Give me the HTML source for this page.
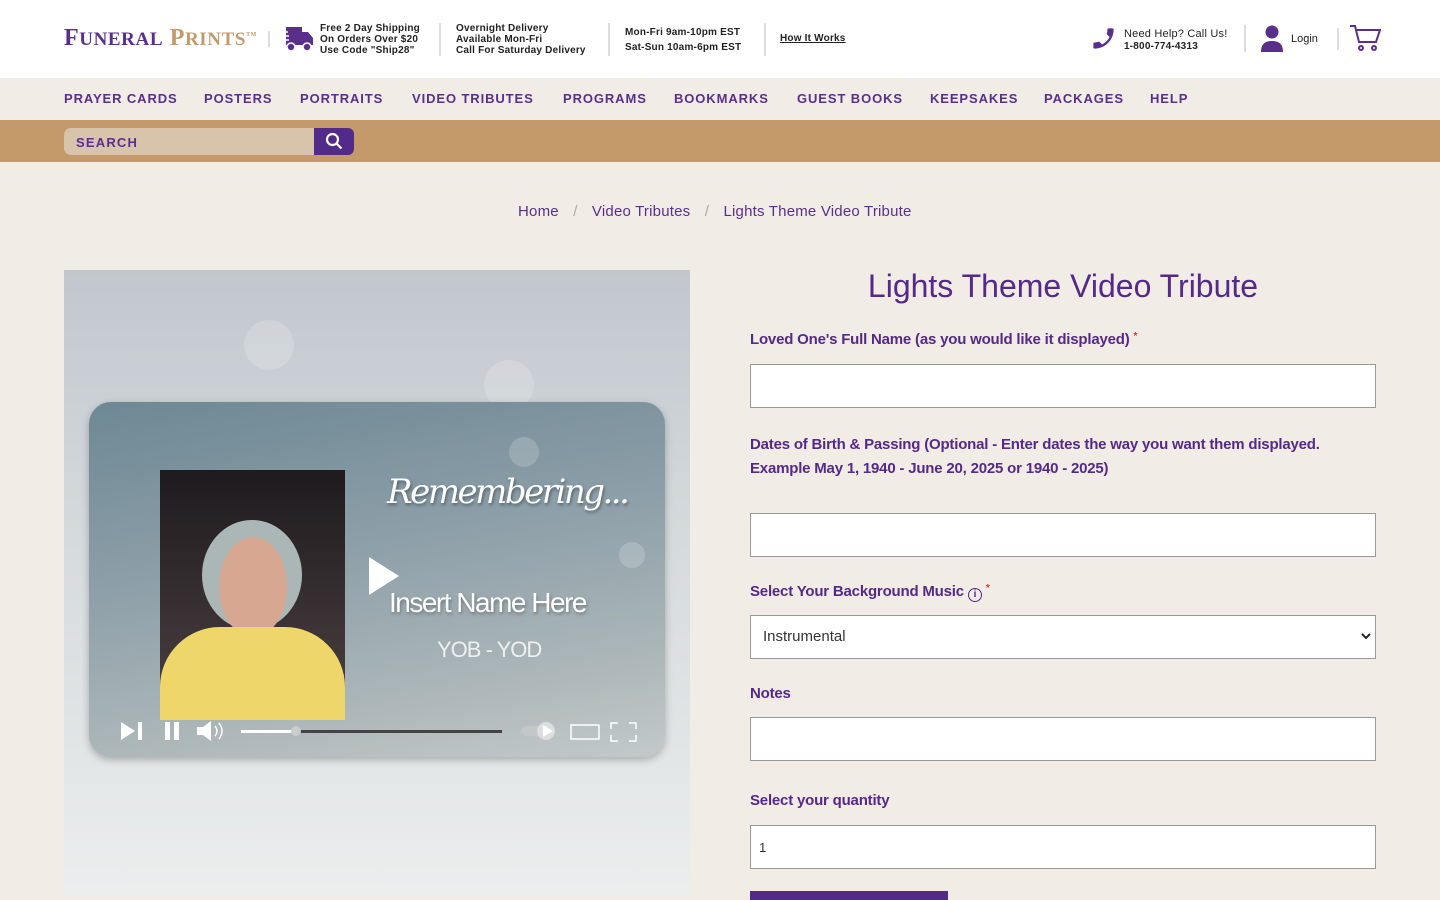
<!DOCTYPE html>
<html><head><meta charset="utf-8"><style>
*{box-sizing:border-box;margin:0;padding:0}
body{width:1440px;height:900px;overflow:hidden;background:#f1ece5;font-family:"Liberation Sans",sans-serif;position:relative}
.a{position:absolute}
.hdr{left:0;top:0;width:1440px;height:78px;background:#fff}
.sm{font-size:10px;line-height:11px;color:#222;font-weight:bold;letter-spacing:.2px}
.sep{width:2px;background:#ddd}
.nav{top:78px;left:0;width:1440px;height:42px;background:#f1ece5}
.nav span{position:absolute;top:91px;font-size:13px;font-weight:bold;color:#5a2f8c;letter-spacing:.9px}
.tan{top:120px;left:0;width:1440px;height:42px;background:#c49a6b}
.lab{font-size:15px;color:#55298a;font-weight:bold;letter-spacing:-.2px}
.inp{left:750px;width:626px;height:44px;background:#fff;border:1px solid #999}
.bk{border-radius:50%;background:rgba(255,255,255,.18)}
</style></head><body>
<div class="a hdr"></div>
<div class="a" style="left:64px;top:25px;font-family:'Liberation Serif',serif;font-weight:bold;font-size:24px;color:#5a2f8c;letter-spacing:.6px">F<span style="font-size:19px">UNERAL</span> <span style="color:#c49a6b">P<span style="font-size:19px">RINTS</span></span><sup style="font-size:6px;color:#c49a6b">TM</sup></div>
<div class="a sep" style="left:268px;top:31px;height:16px"></div>
<svg class="a" style="left:280px;top:25px" width="34" height="27" viewBox="0 0 34 27"><path d="M6 2h16v18H6z M22 7h6l5 6v7H22z" fill="#5a2f8c"/><circle cx="11" cy="22" r="4" fill="#5a2f8c" stroke="#fff" stroke-width="1.5"/><circle cx="27" cy="22" r="4" fill="#5a2f8c" stroke="#fff" stroke-width="1.5"/><path d="M0 7h8M1 11h8M2 15h7" stroke="#fff" stroke-width="1.5"/></svg>
<div class="a sm" style="left:320px;top:23px">Free 2 Day Shipping<br>On Orders Over $20<br>Use Code "Ship28"</div>
<div class="a sep" style="left:439px;top:23px;height:33px"></div>
<div class="a sm" style="left:456px;top:23px">Overnight Delivery<br>Available Mon-Fri<br>Call For Saturday Delivery</div>
<div class="a sep" style="left:608px;top:23px;height:33px"></div>
<div class="a sm" style="left:625px;top:25px;line-height:15px">Mon-Fri 9am-10pm EST<br>Sat-Sun 10am-6pm EST</div>
<div class="a sep" style="left:764px;top:23px;height:33px"></div>
<div class="a sm" style="left:780px;top:33px;text-decoration:underline">How It Works</div>
<svg class="a" style="left:1090px;top:25px" width="27" height="27" viewBox="0 0 24 24"><path d="M20 15.5c-1.2 0-2.4-.2-3.6-.6-.3-.1-.7 0-1 .2l-2.2 2.2c-2.8-1.4-5.1-3.8-6.6-6.6l2.2-2.2c.3-.3.4-.7.2-1-.3-1.100-.5-2.3-.5-3.5 0-.6-.4-1-1-1H4c-.6 0-1 .4-1 1 0 9.4 7.6 17 17 17 .6 0 1-.4 1-1v-3.5c0-.6-.4-1-1-1z" fill="#5a2f8c" transform="scale(-1,1) translate(-24,0)"/></svg>
<div class="a sm" style="left:1124px;top:28px;font-size:11px;line-height:12px;font-weight:normal">Need Help? Call Us!<br><b style="font-size:10px">1-800-774-4313</b></div>
<div class="a sep" style="left:1244px;top:25px;height:27px"></div>
<svg class="a" style="left:1260px;top:25px" width="24" height="27" viewBox="0 0 24 27"><circle cx="12" cy="7" r="6.5" fill="#5a2f8c"/><path d="M1 27c0-8 4-11 11-11s11 3 11 11z" fill="#5a2f8c"/></svg>
<div class="a" style="left:1291px;top:33px;font-size:11px;color:#222">Login</div>
<div class="a sep" style="left:1337px;top:28px;height:22px"></div>
<svg class="a" style="left:1349px;top:24px" width="32" height="28" viewBox="0 0 32 28" fill="none" stroke="#5a2f8c" stroke-width="2"><path d="M1 2h5l4 16h17l4-12H8"/><circle cx="12" cy="24" r="2"/><circle cx="25" cy="24" r="2"/></svg>
<div class="a nav"></div>
<div class="nav">
<span style="left:64px">PRAYER CARDS</span><span style="left:204px">POSTERS</span><span style="left:300px">PORTRAITS</span><span style="left:412px">VIDEO TRIBUTES</span><span style="left:563px">PROGRAMS</span><span style="left:674px">BOOKMARKS</span><span style="left:797px">GUEST BOOKS</span><span style="left:930px">KEEPSAKES</span><span style="left:1044px">PACKAGES</span><span style="left:1150px">HELP</span>
</div>
<div class="a tan"></div>
<div class="a" style="left:64px;top:128px;width:252px;height:27px;background:#d7c4ab;border-radius:7px 0 0 7px"></div>
<div class="a" style="left:76px;top:135px;font-size:13px;font-weight:bold;color:#5a2f8c;letter-spacing:1.2px">SEARCH</div>
<div class="a" style="left:314px;top:128px;width:40px;height:27px;background:#522a88;border-radius:0 6px 6px 0"></div>
<svg class="a" style="left:325px;top:132px" width="18" height="18" viewBox="0 0 18 18" fill="none" stroke="#fff" stroke-width="2.2"><circle cx="7.5" cy="7.5" r="5.5"/><path d="M11.5 11.5l5 5"/></svg>
<div class="a" style="left:518px;top:203px;font-size:15px;color:#5a2f8c;letter-spacing:.2px">Home <span style="color:#aaa;margin:0 10px">/</span> Video Tributes <span style="color:#aaa;margin:0 10px">/</span> Lights Theme Video Tribute</div>
<div class="a" style="left:64px;top:270px;width:626px;height:626px;overflow:hidden;background:linear-gradient(180deg,#c1c7cd 0%,#d6dbde 45%,#dfe3e4 70%,#eceeee 100%)">
 <div class="a bk" style="left:180px;top:50px;width:50px;height:50px"></div>
 <div class="a bk" style="left:420px;top:90px;width:50px;height:50px"></div>
 <div class="a" style="left:25px;top:132px;width:576px;height:355px;border-radius:22px;background:linear-gradient(170deg,#6d8894 0%,#8c9ea8 40%,#aab5b8 75%,#c3c9c9 100%);box-shadow:0 3px 8px rgba(0,0,0,.25);overflow:hidden">
  <div class="a bk" style="left:420px;top:35px;width:30px;height:30px"></div>
  <div class="a bk" style="left:530px;top:140px;width:26px;height:26px"></div>
  <div class="a" style="left:71px;top:68px;width:185px;height:250px;background:linear-gradient(180deg,#1e1a1d,#3a3234 60%,#4a4040);"></div>
  <div class="a" style="left:113px;top:118px;width:100px;height:110px;border-radius:50%;background:#aab7b6"></div>
  <div class="a" style="left:130px;top:135px;width:68px;height:100px;border-radius:50%;background:#d7a792"></div>
  <div class="a" style="left:71px;top:225px;width:185px;height:93px;border-radius:60px 60px 0 0;background:#efd66b"></div>
  <div class="a" style="left:298px;top:70px;font-family:'DejaVu Serif',serif;font-style:italic;font-size:34px;color:#fff;letter-spacing:-2.5px;text-shadow:1px 2px 3px rgba(0,0,0,.4)">Remembering...</div>
  <svg class="a" style="left:278px;top:153px" width="34" height="42"><path d="M2 2l30 19L2 40z" fill="#fff"/></svg>
  <div class="a" style="left:300px;top:185px;font-size:28px;color:#fff;letter-spacing:-1.5px;text-shadow:1px 2px 3px rgba(0,0,0,.3)">Insert Name Here</div>
  <div class="a" style="left:348px;top:235px;font-size:22px;color:#eef0f0;letter-spacing:-1px">YOB - YOD</div>
  <svg class="a" style="left:30px;top:315px" width="550" height="30" fill="#fff"><path d="M2 5l14 9-14 9z"/><rect x="19" y="5" width="4" height="18"/><rect x="46" y="5" width="5" height="18"/><rect x="55" y="5" width="5" height="18"/><path d="M78 10h6l8-6v20l-8-6h-6z"/><path d="M96 9q4 5 0 10M100 6q6 8 0 16" stroke="#fff" fill="none" stroke-width="1.5"/><rect x="122" y="13" width="55" height="3"/><rect x="177" y="13" width="206" height="3" fill="#444"/><circle cx="177" cy="14" r="5" fill="#ccc"/><rect x="402" y="9" width="30" height="10" rx="5" fill="#ccc" opacity=".6"/><circle cx="427" cy="14" r="9" fill="#ddd"/><path d="M424 8l10 6-10 6z"/><rect x="452" y="8" width="28" height="14" fill="none" stroke="#fff" stroke-width="1.5"/><path d="M492 12V6h7M510 6h7v6M517 18v6h-7M499 24h-7v-6" fill="none" stroke="#fff" stroke-width="1.5"/></svg>
 </div>
</div>
<div class="a" style="left:750px;top:268px;width:626px;text-align:center;font-size:32px;color:#55298a">Lights Theme Video Tribute</div>
<div class="a lab" style="left:750px;top:331px">Loved One's Full Name (as you would like it displayed) <span style="color:#d33;font-size:10px;vertical-align:top">*</span></div>
<div class="a inp" style="top:364px"></div>
<div class="a lab" style="left:750px;top:433px;line-height:24px">Dates of Birth &amp; Passing (Optional - Enter dates the way you want them displayed.<br>Example May 1, 1940 - June 20, 2025 or 1940 - 2025)</div>
<div class="a inp" style="top:513px"></div>
<div class="a lab" style="left:750px;top:583px">Select Your Background Music <span style="display:inline-block;width:14px;height:14px;border:1.5px solid #55298a;border-radius:50%;font-size:10px;text-align:center;line-height:11px;vertical-align:-1px">i</span> <span style="color:#d33;font-size:10px;vertical-align:top">*</span></div>
<div class="a inp" style="top:615px"></div>
<div class="a" style="left:763px;top:628px;font-size:15px;color:#333">Instrumental</div>
<svg class="a" style="left:1361px;top:633px" width="10" height="8"><path d="M1 1l4 4 4-4" stroke="#222" stroke-width="2" fill="none"/></svg>
<div class="a lab" style="left:750px;top:685px">Notes</div>
<div class="a inp" style="top:717px"></div>
<div class="a lab" style="left:750px;top:792px">Select your quantity</div>
<div class="a inp" style="top:825px"></div>
<div class="a" style="left:759px;top:840px;font-size:13px;color:#333">1</div>
<div class="a" style="left:750px;top:891px;width:198px;height:9px;background:#522a88"></div>
</body></html>
